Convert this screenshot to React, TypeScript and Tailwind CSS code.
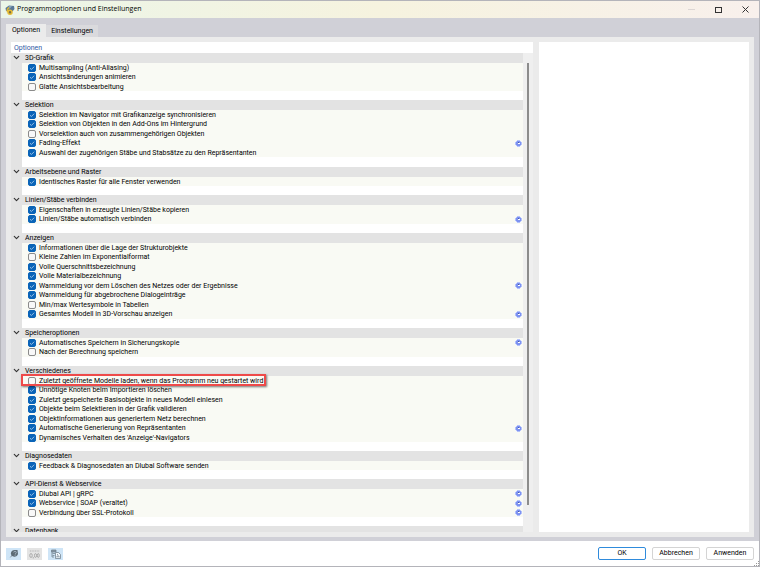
import { useState } from 'react'
import { ChevronDown } from 'lucide-react'

interface Option {
  label: string
  checked?: boolean
  gear?: boolean
  marked?: boolean
}

interface Section {
  title: string
  options: Option[]
}

const SECTIONS: Section[] = [
  {
    title: '3D-Grafik',
    options: [
      { label: 'Multisampling (Anti-Aliasing)', checked: true },
      { label: 'Ansichtsänderungen animieren', checked: true },
      { label: 'Glatte Ansichtsbearbeitung' },
    ],
  },
  {
    title: 'Selektion',
    options: [
      { label: 'Selektion im Navigator mit Grafikanzeige synchronisieren', checked: true },
      { label: 'Selektion von Objekten in den Add-Ons im Hintergrund', checked: true },
      { label: 'Vorselektion auch von zusammengehörigen Objekten' },
      { label: 'Fading-Effekt', checked: true, gear: true },
      { label: 'Auswahl der zugehörigen Stäbe und Stabsätze zu den Repräsentanten', checked: true },
    ],
  },
  {
    title: 'Arbeitsebene und Raster',
    options: [{ label: 'Identisches Raster für alle Fenster verwenden', checked: true }],
  },
  {
    title: 'Linien/Stäbe verbinden',
    options: [
      { label: 'Eigenschaften in erzeugte Linien/Stäbe kopieren', checked: true },
      { label: 'Linien/Stäbe automatisch verbinden', checked: true, gear: true },
    ],
  },
  {
    title: 'Anzeigen',
    options: [
      { label: 'Informationen über die Lage der Strukturobjekte', checked: true },
      { label: 'Kleine Zahlen im Exponentialformat' },
      { label: 'Volle Querschnittsbezeichnung', checked: true },
      { label: 'Volle Materialbezeichnung', checked: true },
      { label: 'Warnmeldung vor dem Löschen des Netzes oder der Ergebnisse', checked: true, gear: true },
      { label: 'Warnmeldung für abgebrochene Dialogeinträge', checked: true },
      { label: 'Min/max Wertesymbole in Tabellen' },
      { label: 'Gesamtes Modell in 3D-Vorschau anzeigen', checked: true, gear: true },
    ],
  },
  {
    title: 'Speicheroptionen',
    options: [
      { label: 'Automatisches Speichern in Sicherungskopie', checked: true, gear: true },
      { label: 'Nach der Berechnung speichern' },
    ],
  },
  {
    title: 'Verschiedenes',
    options: [
      { label: 'Zuletzt geöffnete Modelle laden, wenn das Programm neu gestartet wird', marked: true },
      { label: 'Unnötige Knoten beim Importieren löschen', checked: true },
      { label: 'Zuletzt gespeicherte Basisobjekte in neues Modell einlesen', checked: true },
      { label: 'Objekte beim Selektieren in der Grafik validieren', checked: true },
      { label: 'Objektinformationen aus generiertem Netz berechnen', checked: true },
      { label: 'Automatische Generierung von Repräsentanten', checked: true, gear: true },
      { label: "Dynamisches Verhalten des 'Anzeige'-Navigators", checked: true },
    ],
  },
  {
    title: 'Diagnosedaten',
    options: [{ label: 'Feedback & Diagnosedaten an Dlubal Software senden', checked: true }],
  },
  {
    title: 'API-Dienst & Webservice',
    options: [
      { label: 'Dlubal API | gRPC', checked: true, gear: true },
      { label: 'Webservice | SOAP (veraltet)', checked: true, gear: true },
      { label: 'Verbindung über SSL-Protokoll', gear: true },
    ],
  },
  { title: 'Datenbank', options: [] },
]

function AppLogo() {
  return (
    <svg viewBox="0 0 20 20" className="size-[10px] flex-none" aria-hidden="true">
      <path d="M1 6 8 1l10 1 1 6-4 5-5-3-8 2z" fill="#5b7897" />
      <path d="M8 2h6l-3 4-5 2z" fill="#86a4bb" />
      <path d="M8 5C5 7 4 10 5 14" fill="none" stroke="#e0b62c" strokeWidth="3" />
      <circle cx="10" cy="14.500" r="4" fill="#7c7442" stroke="#e6bb35" strokeWidth="3" />
    </svg>
  )
}

function GearIcon() {
  return (
    <svg viewBox="0 0 7 7" className="size-[7px]" aria-hidden="true">
      <path d="M2 0h3v1h1v1h1v3H6v1H5v1H2V6H1V5H0V2h1V1h1z" fill="#b4c2fb" />
      <path d="M2 1h3v1h1v3H5v1H2V5H1V2h1z" fill="#7d92f0" />
      <path d="M3 3h2v1H3z" fill="#fff" />
      <path d="M3 2h1v1H3z" fill="#4a5aa8" />
    </svg>
  )
}

function HelpIcon() {
  return (
    <svg viewBox="0 0 20 20" className="size-[10px]" aria-hidden="true">
      <path d="M1 18 5 13A7 7 0 0 1 11 2h6l1 8a7 7 0 0 1-9 5l-3-1z" fill="#5d6b76" />
      <path d="M9.500 7a2.500 2.500 0 1 1 3 2.500v1.500M12 12.500v1.500" fill="none" stroke="#b4c6d4" strokeWidth="1.500" />
    </svg>
  )
}

function DecimalsIcon() {
  return (
    <svg viewBox="0 0 22 20" className="h-[10px] w-[11px]" aria-hidden="true" fill="none" stroke="#a0a0a0">
      <path d="M1 4h20M3 2v4M8 2v4M13 2v4M18 2v4" strokeWidth="1" opacity=".5" />
      <ellipse cx="4" cy="13" rx="2.500" ry="4" strokeWidth="1.600" />
      <path d="M8.500 16v3" strokeWidth="1.600" />
      <ellipse cx="13" cy="13" rx="2" ry="4" strokeWidth="1.600" />
      <ellipse cx="18.500" cy="13" rx="2" ry="4" strokeWidth="1.600" />
    </svg>
  )
}

function TransferIcon() {
  return (
    <svg viewBox="0 0 20 20" className="size-[10px]" aria-hidden="true" fill="none" stroke="#6f7f8c" strokeWidth="1.500">
      <path d="M1 2h9v4H1z" fill="#8797a4" />
      <path d="M2 6v10h4M3 9h5M3 13h4" />
      <path d="M9 7h6l4 4v8H9z" fill="#f2f8fd" />
      <path d="M12 17v-3h4v3M12 11h2" />
    </svg>
  )
}

function OptionRow({ option }: { option: Option }) {
  const [checked, setChecked] = useState(!!option.checked)

  return (
    <li className="relative flex h-[9px] items-center pr-px pl-[6px] even:h-[10px]">
      <label className="flex items-center gap-[3px] leading-[12px] whitespace-nowrap">
        <span className="relative grid size-2 flex-none place-items-center">
          <input
            type="checkbox"
            checked={checked}
            onChange={() => setChecked(!checked)}
            className="size-2 appearance-none rounded-[2px] border border-[#8b8b8b] bg-[#f8f8f8] checked:border-[#0a64b8] checked:bg-[#0a64b8]"
          />
          {checked && (
            <svg viewBox="0 0 8 8" className="pointer-events-none absolute inset-0 size-2" aria-hidden="true">
              <path d="M2 4.200 3.400 5.500 6.200 2.700" fill="none" stroke="#b9d6f0" strokeWidth=".8" />
            </svg>
          )}
        </span>
        <span>{option.label}</span>
        {option.marked && (
          <span className="pointer-events-none absolute -top-[2px] -bottom-px -left-px z-10 w-[245px] border-2 border-[#ee4a4a] shadow-[1px_1px_2px_#0008]" />
        )}
      </label>
      {option.gear && (
        <button type="button" aria-label={`${option.label} konfigurieren`} className="ml-auto">
          <GearIcon />
        </button>
      )}
    </li>
  )
}

function OptionSection({ section }: { section: Section }) {
  const [open, setOpen] = useState(true)

  return (
    <section className="flex bg-[#e3e3e3] nth-2:[&_ul]:mb-[10px]">
      <div className="w-[11px] flex-none pl-px">
        <button
          type="button"
          aria-label={section.title}
          aria-expanded={open}
          onClick={() => setOpen(!open)}
          className="block"
        >
          <ChevronDown className="size-[9px]" strokeWidth={3} color="#333" />
        </button>
      </div>
      <div className="min-w-0 flex-1">
        <h3 className="h-[10px] pl-[3px] leading-[11px]">{section.title}</h3>
        {open && (
          <div className="flow-root bg-white">
            <ul className="mb-[9px] bg-[#f9faf4]">
              {section.options.map(option => (
                <OptionRow key={option.label} option={option} />
              ))}
            </ul>
          </div>
        )}
      </div>
    </section>
  )
}

export default function App() {
  return (
    <div className="flex h-screen flex-col overflow-hidden border border-[#b4b4ba] bg-[#d0d0d7] font-[Roboto,'Noto_Sans',sans-serif] text-[7px] text-black">
      <header className="flex h-[17px] flex-none items-center gap-[2px] bg-linear-to-r from-[#ebf5e8] via-[#f6f3df] to-[#f8f0ec] pr-[10px] pl-1">
        <AppLogo />
        <h1 className="flex-1 font-['Open_Sans','Noto_Sans',sans-serif]">Programmoptionen und Einstellungen</h1>
        <div className="flex items-center gap-5">
          <button type="button" aria-label="Minimieren" className="flex h-[7px] w-[7px] items-center">
            <span className="h-px w-full bg-[#dcd6d4]" />
          </button>
          <button type="button" aria-label="Maximieren" className="h-[6px] w-[7px] border border-[#333]" />
          <button type="button" aria-label="Schließen">
            <svg viewBox="0 0 7 7" className="size-[7px]" aria-hidden="true">
              <path d="M.5.5l6 6M6.500.5l-6 6" stroke="#333" />
            </svg>
          </button>
        </div>
      </header>

      <main className="flex min-h-0 flex-1 flex-col px-[5px] pt-[6px] pb-1">
        <div role="tablist" className="flex flex-none items-end">
          <button type="button" role="tab" aria-selected="true" className="h-[13px] bg-[#ebebeb] px-[6px]">
            Optionen
          </button>
          <button type="button" role="tab" aria-selected="false" className="h-3 bg-[#dadadd] px-[5px]">
            Einstellungen
          </button>
        </div>

        <div className="flex min-h-0 flex-1 gap-[6px] bg-[#ebebeb] p-[5px]">
          <div className="flex min-w-0 flex-[522_1_0%] flex-col">
            <h2 className="h-[11px] flex-none bg-white pl-[3px] leading-[12px] text-[#2f58a5]">Optionen</h2>
            <div className="flex min-h-0 flex-1 bg-[#efefef]">
              <div className="min-w-0 flex-1 overflow-hidden">
                {SECTIONS.map(section => (
                  <OptionSection key={section.title} section={section} />
                ))}
              </div>
              <div className="flex w-[10px] flex-none justify-center pt-[10px] pb-[27px]">
                <div className="w-[2px] bg-[#8c8c8c]" />
              </div>
            </div>
          </div>
          <div className="flex-[210_1_0%] bg-white" />
        </div>
      </main>

      <footer className="flex h-[25px] flex-none items-center bg-white px-[5px]">
        <div className="flex flex-1 gap-[6px]">
          <button type="button" aria-label="Hilfe" className="grid h-3 w-[15px] place-items-center bg-[#cfe5f7]">
            <HelpIcon />
          </button>
          <button type="button" aria-label="Dezimalstellen" className="grid h-3 w-[15px] place-items-center bg-[#e4e4e4]">
            <DecimalsIcon />
          </button>
          <button type="button" aria-label="Übertragen" className="grid h-3 w-[15px] place-items-center bg-[#cfe5f7]">
            <TransferIcon />
          </button>
        </div>
        <div className="flex gap-[6px]">
          <button type="button" className="h-[13px] w-12 rounded-[2px] border border-[#2f8bdc] leading-none">OK</button>
          <button type="button" className="h-[13px] w-12 rounded-[2px] border border-[#d4d4d4] leading-none">Abbrechen</button>
          <button type="button" className="h-[13px] w-12 rounded-[2px] border border-[#d4d4d4] leading-none">Anwenden</button>
        </div>
        <svg viewBox="0 0 5 5" className="absolute right-px bottom-px size-[5px]" aria-hidden="true">
          <path d="M4 0h1v1H4zM2 2h1v1H2zM4 2h1v1H4zM0 4h1v1H0zM2 4h1v1H2zM4 4h1v1H4z" fill="#999" />
        </svg>
      </footer>
    </div>
  )
}
